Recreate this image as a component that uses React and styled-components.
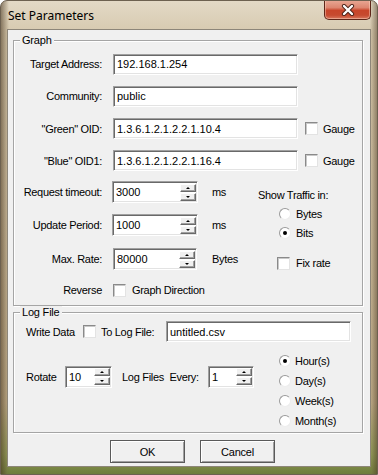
import React from 'react'
import styled, { createGlobalStyle } from 'styled-components'

const GlobalStyle = createGlobalStyle`
  html, body {
    margin: 0;
    padding: 0;
    background: #fff;
  }
  body {
    font-family: "Liberation Sans", Arial, sans-serif;
    font-size: 11px;
    color: #000;
  }
  * { box-sizing: border-box; }
`

const Window = styled.div`
  width: 378px;
  height: 475px;
  display: flex;
  flex-direction: column;
  border-radius: 7px 7px 0 0;
  overflow: hidden;
  border: 1px solid #6d6150;
  background:
    linear-gradient(90deg, rgba(70,52,30,0.55) 0, rgba(120,100,70,0.2) 6px, rgba(0,0,0,0) 8px, rgba(0,0,0,0) 369px, rgba(120,100,70,0.2) 371px, rgba(70,52,30,0.6) 378px),
    linear-gradient(180deg, #e3d9c6 0%, #d6c9ae 7%, #cdbd9f 45%, #bfac89 85%, #8e9955 96%, #6f7d3c 100%);
`

const TitleBar = styled.div`
  height: 28px;
  display: flex;
  align-items: flex-start;
  flex-shrink: 0;
`

const Title = styled.div`
  font-family: "Noto Sans", "Open Sans", sans-serif;
  font-size: 12px;
  line-height: 16px;
  padding: 7px 0 0 7px;
  color: #000;
`

const CloseButton = styled.div`
  margin-left: auto;
  margin-right: 6px;
  margin-top: -1px;
  width: 47px;
  height: 20px;
  border: 1px solid #5e2619;
  border-top: none;
  border-radius: 0 0 5px 5px;
  display: flex;
  align-items: center;
  justify-content: center;
  background: linear-gradient(180deg, #e9a996 0%, #dd8670 40%, #c8452a 55%, #c64a2f 80%, #d8775e 100%);
  box-shadow: inset 0 0 0 1px rgba(255,220,200,0.45);
`

const Client = styled.div`
  margin: 0 6px;
  height: 438px;
  background: #f0f0f0;
  border: 1px solid #8d8679;
  display: flex;
  flex-direction: column;
  padding: 0 0 0 5px;
`

const Group = styled.div`
  position: relative;
  width: 350px;
  height: ${p => p.h}px;
  margin-top: ${p => p.mt}px;
  border: 1px solid #a5a5a5;
  box-shadow: inset 1px 1px 0 #fff, 1px 1px 0 #fff;
  padding-top: ${p => p.pt}px;
`

const Legend = styled.div`
  position: absolute;
  top: -7px;
  left: 6px;
  padding: 0 2px;
  line-height: 13px;
  background: #f0f0f0;
  letter-spacing: -0.2px;
`

const Row = styled.div`
  display: flex;
  align-items: center;
  height: ${p => p.h}px;
`

const Label = styled.div`
  width: 88px;
  text-align: right;
  letter-spacing: -0.3px;
  white-space: nowrap;
`

const Text = styled.span`
  white-space: nowrap;
  letter-spacing: -0.3px;
  margin-left: ${p => p.ml || 0}px;
  width: ${p => (p.w ? p.w + 'px' : 'auto')};
  flex-shrink: 0;
`

const Sunken = styled.div`
  height: ${p => p.h || 21}px;
  width: ${p => p.w}px;
  margin-left: ${p => p.ml || 0}px;
  background: #fff;
  border-top: 1px solid #a0a0a0;
  border-left: 1px solid #a0a0a0;
  border-bottom: 1px solid #fff;
  border-right: 1px solid #fff;
  box-shadow: inset 1px 1px 0 #696969, inset -1px -1px 0 #e3e3e3;
  display: flex;
  align-items: center;
  padding-left: 3px;
  flex-shrink: 0;
  white-space: nowrap;
  overflow: hidden;
`

const FieldText = styled.span`
  flex: 1;
`

const SpinCol = styled.div`
  display: flex;
  flex-direction: column;
  gap: 1px;
  margin-right: 1px;
`

const SpinBtn = styled.div`
  width: 16px;
  height: 8px;
  background: #f0f0f0;
  border-top: 1px solid #fff;
  border-left: 1px solid #fff;
  border-bottom: 1px solid #696969;
  border-right: 1px solid #696969;
  box-shadow: inset -1px -1px 0 #a0a0a0;
  display: flex;
  align-items: center;
  justify-content: center;
`

const Arrow = styled.span`
  width: 0;
  height: 0;
  border-left: 2px solid transparent;
  border-right: 2px solid transparent;
  ${p => (p.down ? 'border-top: 2px solid #000;' : 'border-bottom: 2px solid #000;')}
`

const Check = styled.div`
  width: 13px;
  height: 13px;
  flex-shrink: 0;
  margin-left: ${p => p.ml || 0}px;
  background: #fff;
  border: 1px solid;
  border-color: #8a8a8a #e3e3e3 #e3e3e3 #8a8a8a;
  box-shadow: inset 1px 1px 0 #c8c8c8;
`

const Radio = styled.div`
  width: 12px;
  height: 12px;
  flex-shrink: 0;
  margin-left: ${p => p.ml || 0}px;
  border-radius: 50%;
  background: #fff;
  border: 1px solid;
  border-color: #9a9a9a #ececec #ececec #9a9a9a;
  display: flex;
  align-items: center;
  justify-content: center;
  &::after {
    content: '';
    width: 4px;
    height: 4px;
    border-radius: 50%;
    background: ${p => (p.on ? '#000' : 'transparent')};
  }
`

const Lower = styled.div`
  display: flex;
`

const LeftCol = styled.div`
  width: 244px;
`

const TrafficPanel = styled.div`
  padding-top: 12px;
  display: flex;
  flex-direction: column;
`

const PanelLine = styled.div`
  display: flex;
  align-items: center;
  height: ${p => p.h}px;
  margin-top: ${p => p.mt || 0}px;
  padding-left: ${p => p.pl || 0}px;
`

const LogBody = styled.div`
  display: flex;
`

const RotateArea = styled.div`
  width: 265px;
  padding: 23px 0 0 12px;
`

const RadioCol = styled.div`
  display: flex;
  flex-direction: column;
`

const Buttons = styled.div`
  display: flex;
  margin: 7px 0 0 97px;
  gap: 15px;
`

const Button = styled.div`
  width: 75px;
  height: 23px;
  display: flex;
  align-items: center;
  justify-content: center;
  background: #f0f0f0;
  border: 1px solid #5a5a5a;
  box-shadow: inset 1px 1px 0 #fff, inset -1px -1px 0 #a0a0a0;
  letter-spacing: -0.2px;
`

const Spinner = ({ value, w, ml }) => (
  <Sunken w={w} ml={ml} h={22}>
    <FieldText>{value}</FieldText>
    <SpinCol>
      <SpinBtn><Arrow /></SpinBtn>
      <SpinBtn><Arrow down /></SpinBtn>
    </SpinCol>
  </Sunken>
)

const CloseIcon = () => (
  <svg width="14" height="12" viewBox="0 0 14 12">
    <path d="M3 2 L11 10 M11 2 L3 10" stroke="#4a2118" strokeWidth="4.2" strokeLinecap="round" />
    <path d="M3 2 L11 10 M11 2 L3 10" stroke="#fff" strokeWidth="2.4" strokeLinecap="round" />
  </svg>
)

export default function App() {
  return (
    <>
      <GlobalStyle />
      <Window>
        <TitleBar>
          <Title>Set Parameters</Title>
          <CloseButton><CloseIcon /></CloseButton>
        </TitleBar>
        <Client>
          <Group h={266} mt={10} pt={7}>
            <Legend>Graph</Legend>
            <Row h={32}>
              <Label>Target Address:</Label>
              <Sunken w={185} ml={11}>192.168.1.254</Sunken>
            </Row>
            <Row h={32}>
              <Label>Community:</Label>
              <Sunken w={185} ml={11}>public</Sunken>
            </Row>
            <Row h={33}>
              <Label>"Green" OID:</Label>
              <Sunken w={185} ml={11}>1.3.6.1.2.1.2.2.1.10.4</Sunken>
              <Check ml={7} />
              <Text ml={5}>Gauge</Text>
            </Row>
            <Row h={31}>
              <Label>"Blue" OID1:</Label>
              <Sunken w={185} ml={11}>1.3.6.1.2.1.2.2.1.16.4</Sunken>
              <Check ml={7} />
              <Text ml={5}>Gauge</Text>
            </Row>
            <Lower>
              <LeftCol>
                <Row h={32}>
                  <Label>Request timeout:</Label>
                  <Spinner value="3000" w={86} ml={10} />
                  <Text ml={14}>ms</Text>
                </Row>
                <Row h={34}>
                  <Label>Update Period:</Label>
                  <Spinner value="1000" w={86} ml={10} />
                  <Text ml={14}>ms</Text>
                </Row>
                <Row h={34}>
                  <Label>Max. Rate:</Label>
                  <Spinner value="80000" w={84} ml={11} />
                  <Text ml={15}>Bytes</Text>
                </Row>
              </LeftCol>
              <TrafficPanel>
                <PanelLine h={14}>
                  <Text>Show Traffic in:</Text>
                </PanelLine>
                <PanelLine h={18} mt={3} pl={21}>
                  <Radio />
                  <Text ml={5}>Bytes</Text>
                </PanelLine>
                <PanelLine h={18} mt={1} pl={21}>
                  <Radio on />
                  <Text ml={5}>Bits</Text>
                </PanelLine>
                <PanelLine h={18} mt={12} pl={19}>
                  <Check />
                  <Text ml={6}>Fix rate</Text>
                </PanelLine>
              </TrafficPanel>
            </Lower>
            <Row h={28}>
              <Label>Reverse</Label>
              <Check ml={11} />
              <Text ml={6}>Graph Direction</Text>
            </Row>
          </Group>

          <Group h={121} mt={6} pt={8}>
            <Legend>Log File</Legend>
            <Row h={21}>
              <Text ml={12} w={57}>Write Data</Text>
              <Check />
              <Text ml={5} w={65}>To Log File:</Text>
              <Sunken w={185}>untitled.csv</Sunken>
            </Row>
            <LogBody>
              <RotateArea>
                <Row h={23}>
                  <Text w={39}>Rotate</Text>
                  <Spinner value="10" w={47} />
                  <Text ml={10} w={86}>Log Files&nbsp; Every:</Text>
                  <Spinner value="1" w={46} />
                </Row>
              </RotateArea>
              <RadioCol>
                <PanelLine h={20} mt={9}>
                  <Radio on />
                  <Text ml={4}>Hour(s)</Text>
                </PanelLine>
                <PanelLine h={20}>
                  <Radio />
                  <Text ml={4}>Day(s)</Text>
                </PanelLine>
                <PanelLine h={20}>
                  <Radio />
                  <Text ml={4}>Week(s)</Text>
                </PanelLine>
                <PanelLine h={20}>
                  <Radio />
                  <Text ml={4}>Month(s)</Text>
                </PanelLine>
              </RadioCol>
            </LogBody>
          </Group>

          <Buttons>
            <Button>OK</Button>
            <Button>Cancel</Button>
          </Buttons>
        </Client>
      </Window>
    </>
  )
}
